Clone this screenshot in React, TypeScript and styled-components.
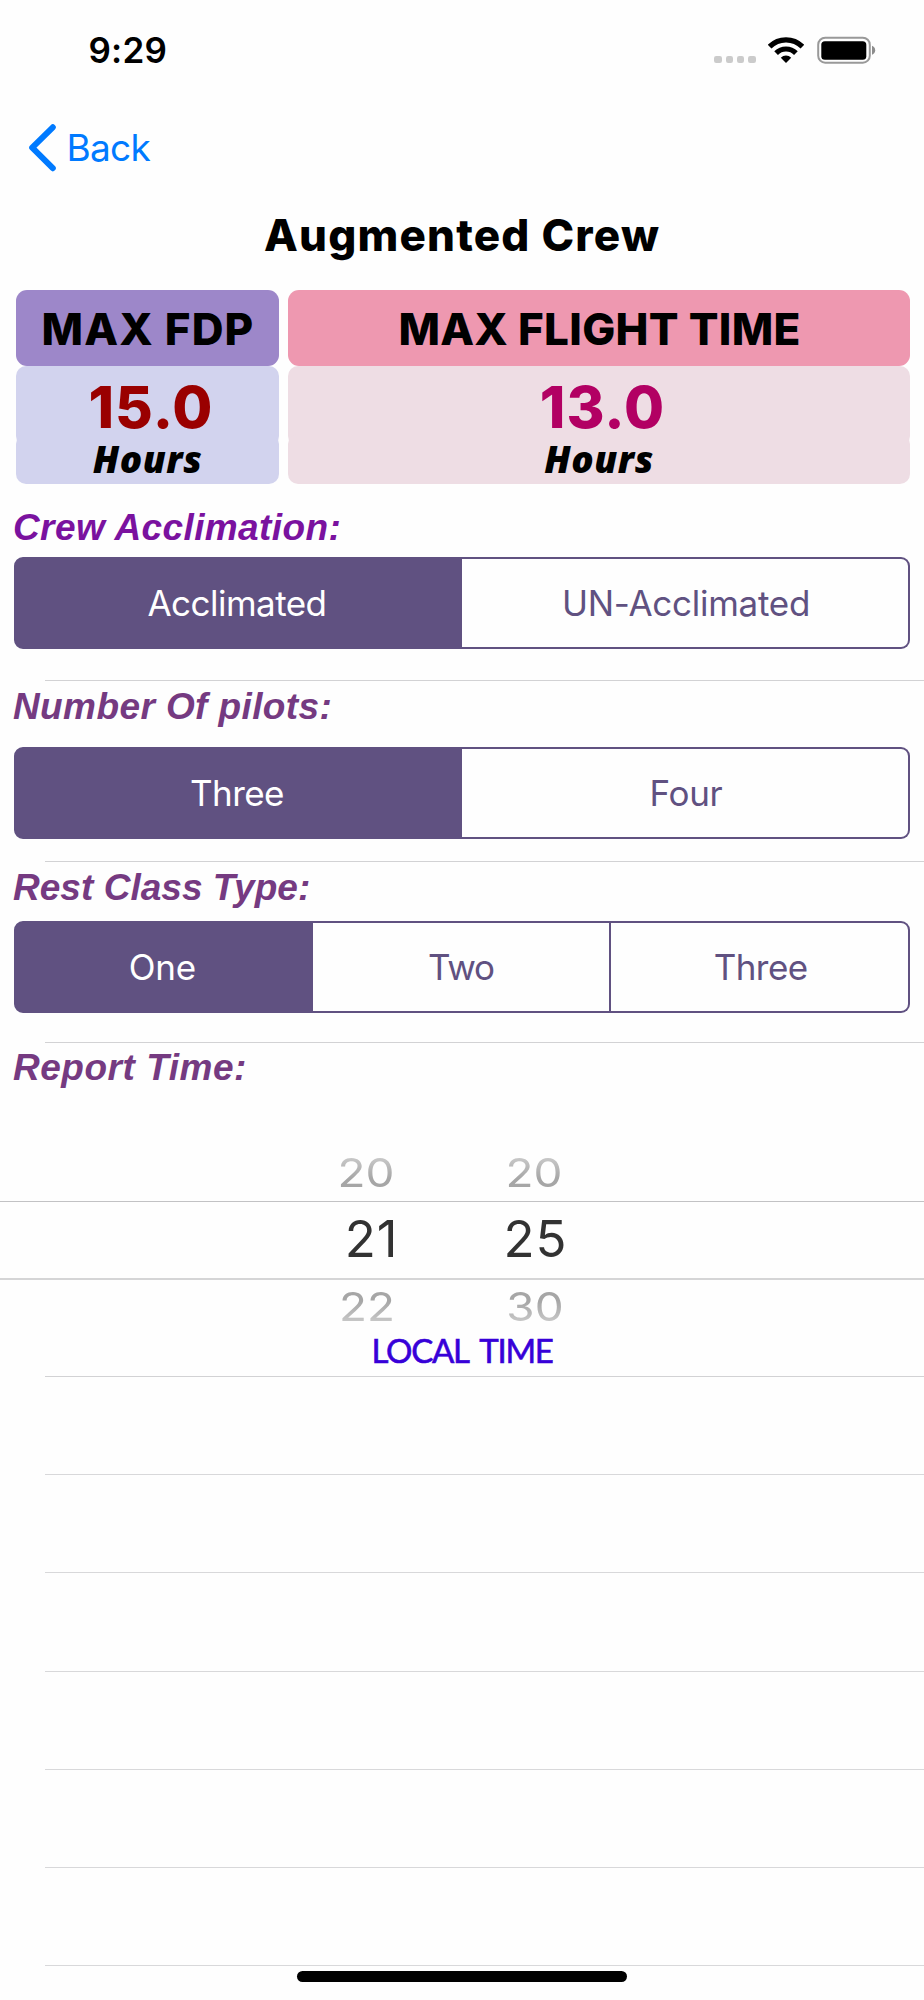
import React from 'react';
import styled, { createGlobalStyle } from 'styled-components';

const sans = `Inter, "Liberation Sans", sans-serif`;
const violet = '#605181';
const paper = '#fefefe';

const GlobalStyle = createGlobalStyle`
  *, *::before, *::after { box-sizing: border-box; }
  body { margin: 0; background: ${paper}; font-family: ${sans}; }
`;

const Screen = styled.div`
  position: relative;
  width: 924px;
  height: 2000px;
  overflow: hidden;
  display: flex;
  flex-direction: column;
  background: ${paper};
`;

const StatusBar = styled.header`
  height: 100px;
  padding: 30px 48px 0 88.5px;
  display: flex;
  justify-content: space-between;
  align-items: flex-start;
`;

const Clock = styled.span`
  font-size: 35px;
  line-height: 40px;
  font-weight: 600;
  letter-spacing: 0.2px;
  color: #000;
`;

const StatusIcons = styled.div`
  display: flex;
  align-items: flex-end;
  height: 34px;
  svg { display: block; }
`;

const SignalDots = styled.div`
  display: flex;
  gap: 3.3px;
  margin: 0 12.5px 1px 0;
`;

const Dot = styled.i`
  width: 7.8px;
  height: 7.5px;
  border-radius: 2.2px;
  background: #cbcbcb;
`;

const BatterySlot = styled.div`
  margin-left: 12px;
`;

const NavBar = styled.nav`
  height: 110px;
  padding: 24px 0 0 29px;
`;

const BackButton = styled.button`
  display: flex;
  align-items: center;
  gap: 9.5px;
  padding: 0;
  border: 0;
  background: none;
  color: #007aff;
  font: 400 37px/48px ${sans};
  letter-spacing: -0.7px;
  svg { display: block; }
`;

const Title = styled.h1`
  margin: 0;
  height: 80px;
  text-align: center;
  font: 800 44px/50px ${sans};
  letter-spacing: 1.19px;
  color: #000;
`;

const Limits = styled.section`
  display: grid;
  grid-template-columns: 263px 1fr;
  column-gap: 9px;
  height: 194px;
  padding: 0 14px 0 16px;
`;

const LimitColumn = styled.div`
  display: flex;
  flex-direction: column;
  text-align: center;
`;

const LimitHeader = styled.div<{ $bg: string; $spacing: number }>`
  height: 76px;
  padding: 1px 0 0 1px;
  display: flex;
  align-items: center;
  justify-content: center;
  border-radius: 11px;
  background: ${(p) => p.$bg};
  font-size: 44px;
  line-height: 50px;
  font-weight: 800;
  letter-spacing: ${(p) => p.$spacing}px;
  color: #000;
`;

const LimitValue = styled.div<{ $bg: string; $color: string }>`
  height: 80px;
  padding: 10px 0 0 7px;
  border-radius: 10px;
  background: ${(p) => p.$bg};
  color: ${(p) => p.$color};
  font-size: 58px;
  line-height: 62px;
  font-weight: 800;
  letter-spacing: 1px;
`;

const LimitUnit = styled.div<{ $bg: string }>`
  height: 50px;
  margin-top: -12px;
  padding-top: 5px;
  border-radius: 10px;
  background: ${(p) => p.$bg};
  font: italic 800 37px/40px "Open Sans", sans-serif;
  letter-spacing: 0.6px;
  color: #000;
`;

const FormRow = styled.section<{ $height: number; $top: number }>`
  height: ${(p) => p.$height}px;
  padding-top: ${(p) => p.$top}px;
  display: flex;
  flex-direction: column;
`;

const Label = styled.h2<{ $bright?: boolean; $spacing: number }>`
  margin: 0 0 0 13px;
  height: 40px;
  padding-top: 1px;
  flex: none;
  font: italic 700 37px/40px "Liberation Sans", Arial, sans-serif;
  letter-spacing: ${(p) => p.$spacing}px;
  color: ${(p) => (p.$bright ? '#7a129f' : '#753a81')};
`;

const Segmented = styled.div<{ $gap: number }>`
  display: grid;
  grid-auto-flow: column;
  grid-auto-columns: minmax(0, 1fr);
  height: 92px;
  flex: none;
  margin: ${(p) => p.$gap}px 14px 0;
`;

const Segment = styled.button<{ $active?: boolean; $spacing: number }>`
  min-width: 0;
  padding: 0;
  border: 2px solid ${violet};
  border-left-width: 0;
  background: ${(p) => (p.$active ? violet : paper)};
  color: ${(p) => (p.$active ? '#fff' : violet)};
  font: 400 35px/42px ${sans};
  letter-spacing: ${(p) => p.$spacing}px;
  &:first-child {
    padding-right: 2px;
    border-left-width: 2px;
    border-radius: 9px 0 0 9px;
  }
  &:last-child {
    padding-left: 2px;
    border-radius: 0 9px 9px 0;
  }
`;

const Separator = styled.hr`
  flex: none;
  width: auto;
  height: 1px;
  margin: 0 0 0 45px;
  border: 0;
  background: #d2d2d4;
`;

const Wheel = styled.div`
  padding-top: 66px;
  display: flex;
  flex-direction: column;
`;

const WheelRow = styled.div<{ $fade: 'up' | 'down' }>`
  display: grid;
  grid-template-columns: 168px 168px;
  height: 40px;
  margin: ${(p) => (p.$fade === 'up' ? '0 0 8px 282px' : '7px 0 0 283px')};
  text-align: center;
  font-size: 40px;
  line-height: 40px;
  color: #a6a6a6;
  mask-image: linear-gradient(
    ${(p) => (p.$fade === 'up' ? 'to top' : 'to bottom')},
    #000 35%, rgba(0, 0, 0, 0.6) 90%
  );
`;

const WheelItem = styled.span`
  transform: scaleX(1.147);
`;

const SelectedRow = styled.div`
  display: grid;
  grid-template-columns: 164px 164px;
  height: 79px;
  padding-left: 289.5px;
  border-top: 1px solid #c2c2c4;
  border-bottom: 2px solid #d5d5d6;
  text-align: center;
  font-size: 51px;
  line-height: 74px;
  letter-spacing: 0.9px;
  color: #323232;
`;

const ZoneNote = styled.div`
  margin-top: 5px;
  text-align: center;
  font: 400 33px/36px Lato, sans-serif;
  letter-spacing: -1.3px;
  word-spacing: 5.5px;
  -webkit-text-stroke: 0.6px #3700d8;
  color: #3700d8;
`;

const EmptyRow = styled.div`
  height: 98.2px;
  flex: none;
  margin-left: 45px;
  border-bottom: 1px solid #d8d8da;
`;

const HomeIndicator = styled.div`
  position: absolute;
  left: 297px;
  bottom: 18px;
  width: 330px;
  height: 11px;
  border-radius: 6px;
  background: #000;
`;

const WifiIcon = () => (
  <svg width="36" height="27" viewBox="0 0 36 27" fill="none">
    <path d="M1.6 9.6A23.2 23.2 0 0 1 34.4 9.6" stroke="#000" strokeWidth="5.2" />
    <path d="M8.1 16.1A14 14 0 0 1 27.9 16.1" stroke="#000" strokeWidth="5.2" />
    <path d="M18 26L12.8 20.8A7.3 7.3 0 0 1 23.2 20.8Z" fill="#000" />
  </svg>
);

const BatteryIcon = () => (
  <svg width="60" height="28" viewBox="0 0 60 28" fill="none">
    <rect x="2.2" y="1.7" width="51.6" height="25" rx="7" stroke="#999" strokeWidth="2" />
    <rect x="5.3" y="5.2" width="45" height="18.6" rx="3.6" fill="#000" />
    <path d="M56 9.8C58 10.6 59.2 12.3 59.2 14.3S58 18 56 18.8Z" fill="#8c8c8c" />
  </svg>
);

const BackChevron = () => (
  <svg width="28" height="48" viewBox="0 0 28 48" fill="none">
    <path
      d="M23.8 3.3L3.2 23.7L23.8 44.2"
      stroke="#007aff"
      strokeWidth="6"
      strokeLinecap="round"
      strokeLinejoin="round"
    />
  </svg>
);

const limits = [
  { name: 'MAX FDP', value: '15.0', head: '#9d87c9', body: '#d2d3ee', ink: '#9a0000', spacing: 1.17 },
  { name: 'MAX FLIGHT TIME', value: '13.0', head: '#ee98b0', body: '#eedde4', ink: '#b20063', spacing: 0.29 },
];

export default function App() {
  return (
    <>
      <GlobalStyle />
      <Screen>
        <StatusBar>
          <Clock>9:29</Clock>
          <StatusIcons>
            <SignalDots>
              <Dot />
              <Dot />
              <Dot />
              <Dot />
            </SignalDots>
            <WifiIcon />
            <BatterySlot>
              <BatteryIcon />
            </BatterySlot>
          </StatusIcons>
        </StatusBar>

        <NavBar>
          <BackButton>
            <BackChevron />
            Back
          </BackButton>
        </NavBar>

        <Title>Augmented Crew</Title>

        <Limits>
          {limits.map((l) => (
            <LimitColumn key={l.name}>
              <LimitHeader $bg={l.head} $spacing={l.spacing}>{l.name}</LimitHeader>
              <LimitValue $bg={l.body} $color={l.ink}>{l.value}</LimitValue>
              <LimitUnit $bg={l.body}>Hours</LimitUnit>
            </LimitColumn>
          ))}
        </Limits>

        <FormRow $height={196} $top={23}>
          <Label $bright $spacing={0.4}>Crew Acclimation:</Label>
          <Segmented $gap={10}>
            <Segment $active $spacing={-0.54}>Acclimated</Segment>
            <Segment $spacing={-0.27}>UN-Acclimated</Segment>
          </Segmented>
        </FormRow>
        <Separator />

        <FormRow $height={180} $top={5}>
          <Label $spacing={0.4}>Number Of pilots:</Label>
          <Segmented $gap={21}>
            <Segment $active $spacing={-0.57}>Three</Segment>
            <Segment $spacing={-0.33}>Four</Segment>
          </Segmented>
        </FormRow>
        <Separator />

        <FormRow $height={180} $top={5}>
          <Label $spacing={0.03}>Rest Class Type:</Label>
          <Segmented $gap={14}>
            <Segment $active $spacing={-0.2}>One</Segment>
            <Segment $spacing={-1.2}>Two</Segment>
            <Segment $spacing={-0.57}>Three</Segment>
          </Segmented>
        </FormRow>
        <Separator />

        <FormRow $height={333} $top={4}>
          <Label $spacing={0.53}>Report Time:</Label>
          <Wheel>
            <WheelRow $fade="up">
              <WheelItem>20</WheelItem>
              <WheelItem>20</WheelItem>
            </WheelRow>
            <SelectedRow>
              <span>21</span>
              <span>25</span>
            </SelectedRow>
            <WheelRow $fade="down">
              <WheelItem>22</WheelItem>
              <WheelItem>30</WheelItem>
            </WheelRow>
          </Wheel>
          <ZoneNote>LOCAL TIME</ZoneNote>
        </FormRow>
        <Separator />

        {[0, 1, 2, 3, 4, 5].map((n) => (
          <EmptyRow key={n} />
        ))}

        <HomeIndicator />
      </Screen>
    </>
  );
}
